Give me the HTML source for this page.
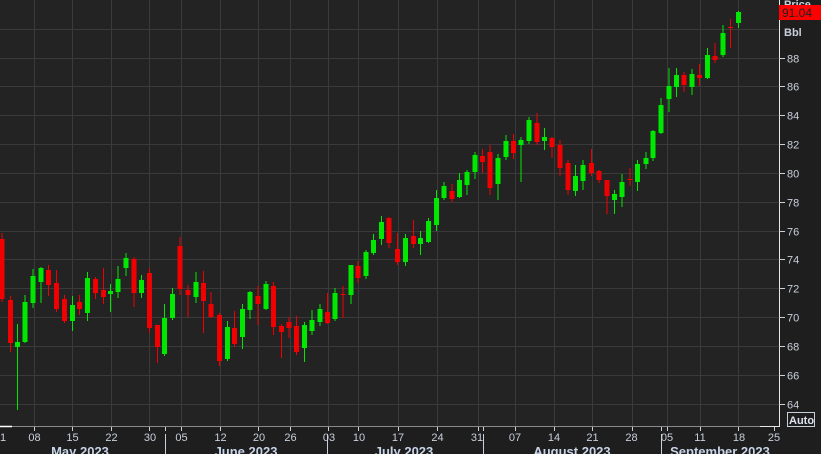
<!DOCTYPE html>
<html><head><meta charset="utf-8"><style>
html,body{margin:0;padding:0;background:#1e1e1e;width:821px;height:454px;overflow:hidden}
svg{display:block}
text{font-family:"Liberation Sans",sans-serif}
</style></head><body>
<svg width="821" height="454" viewBox="0 0 821 454" xmlns="http://www.w3.org/2000/svg">
<rect x="0" y="0" width="821" height="454" fill="#1e1e1e"/>
<rect x="0" y="0" width="779" height="426" fill="#232323"/>
<g stroke="#3a3a3a" stroke-width="1">
<path d="M0 404.5H779M0 375.5H779M0 346.5H779M0 317.5H779M0 288.5H779M0 259.5H779M0 231.5H779M0 202.5H779M0 173.5H779M0 144.5H779M0 115.5H779M0 86.5H779M0 58.5H779M0 29.5H779"/>
<path d="M34.5 0V426M72.5 0V426M111.5 0V426M149.5 0V426M181.5 0V426M220.5 0V426M258.5 0V426M290.5 0V426M328.5 0V426M358.5 0V426M398.5 0V426M437.5 0V426M478.5 0V426M515.5 0V426M554.5 0V426M592.5 0V426M632.5 0V426M667.5 0V426M700.5 0V426M738.5 0V426"/>
</g>
<g fill="none" stroke-linecap="butt">
<path stroke="#00e800" stroke-width="1" d="M17.5 324V410 M25 295V343 M33 269V308 M41 267V303 M72.5 296V331 M87.5 272V321 M110.5 284V312 M118 266V298 M126 253V276 M141.5 275V298 M164.5 304V356 M172.5 288V320 M196 272V303 M227.5 321V361 M242.5 304V349 M250 291V319 M266 281V310 M304.5 322V362 M312 310V335 M320 304V326 M335 288V321 M351 265V304 M366 250V279 M373.5 234V255 M381.5 216V245 M405.5 234V266 M420.5 231V255 M428.5 218V243 M436.5 190V231 M444 182V200 M459.5 173V198 M467 170V195 M475 152V179 M498 154V200 M506 135V160 M521 137V182 M529 117V144 M544.5 128V150 M575.5 165V196 M583 160V190 M614.5 190V214 M622 174V207 M637.5 160V191 M646 152V169 M653 130V161 M661 98V134 M669 68V112 M676.5 68V97 M692 69V95 M707.5 48V79 M723 25V57 M738.5 11V28"/>
<path stroke="#00e800" stroke-width="5" d="M17.5 342V347 M25 302V342 M33 276V303 M41 268V282 M72.5 305V321 M87.5 278V313 M110.5 291V294 M118 279V292 M126 258V268 M141.5 280V293 M164.5 318V354 M172.5 294V318 M196 282V297 M227.5 327V359 M242.5 309V337 M250 292V310 M266 284V309 M304.5 325V348 M312 320V331 M320 309V322 M335 293V319 M351 265V295 M366 252V276 M373.5 240V253 M381.5 222V239 M405.5 238V262 M420.5 238V244 M428.5 221V242 M436.5 198V225 M444 186V198 M459.5 180V197 M467 172V185 M475 155V172 M498 158V184 M506 141V157 M521 140V145 M529 120V141 M544.5 137V141 M575.5 176V191 M583 165V181 M614.5 194V200 M622 182V197 M637.5 164V182 M646 158V164 M653 131V158 M661 105V133 M669 86V99 M676.5 75V87 M692 74V87 M707.5 55V78 M723 33V55 M738.5 12V23"/>
<path stroke="#f00000" stroke-width="1" d="M2 233V302 M10.5 296V352 M48.5 265V296 M56.5 270V312 M64.5 295V323 M79.5 295V315 M95.5 277V299 M103.5 268V304 M134 257V307 M149.5 268V333 M157.5 325V363 M180 237V295 M188 285V317 M203.5 271V333 M211 292V318 M219.5 313V366 M234.5 311V347 M258 286V325 M273.5 282V335 M281.5 324V358 M289 317V338 M296.5 316V355 M327.5 293V324 M343 286V318 M358 261V283 M389 217V248 M397.5 233V265 M413.5 220V248 M452 184V202 M482.5 149V173 M490 145V195 M513.5 134V159 M537 113V145 M552 137V158 M560 140V176 M568 160V195 M591.5 149V176 M599 170V183 M607 180V214 M630 168V186 M684 72V92 M699.5 64V86 M715 43V63 M730.5 19V48"/>
<path stroke="#f00000" stroke-width="5" d="M2 239V299 M10.5 300V343 M48.5 270V285 M56.5 283V309 M64.5 299V321 M79.5 302V309 M95.5 279V293 M103.5 290V297 M134 259V293 M149.5 273V328 M157.5 325V347 M180 246V289 M188 290V295 M203.5 283V301 M211 304V317 M219.5 315V361 M234.5 328V344 M258 296V304 M273.5 286V327 M281.5 326V332 M289 322V328 M296.5 326V352 M327.5 312V323 M343 294V295 M358 266V278 M389 218V243 M397.5 249V262 M413.5 236V244 M452 191V199 M482.5 156V162 M490 152V188 M513.5 141V153 M537 123V142 M552 138V147 M560 145V168 M568 163V190 M591.5 163V173 M599 171V180 M607 180V196 M630 179V180 M684 75V85 M699.5 75V78 M715 56V60 M730.5 27V28"/>
</g>
<!-- axes -->
<path d="M0 426.5H779" stroke="#8a8a8a" stroke-width="1"/>
<path d="M0 426.5H12" stroke="#ffffff" stroke-width="1.5"/>
<path d="M760 426.5H779.5V0" stroke="#e8e8e8" stroke-width="1" fill="none"/>
<g stroke="#c8d0dc" stroke-width="1">
<path d="M779 404.5H785M779 375.5H785M779 346.5H785M779 317.5H785M779 288.5H785M779 259.5H785M779 231.5H785M779 202.5H785M779 173.5H785M779 144.5H785M779 115.5H785M779 86.5H785M779 58.5H785"/>
<path d="M34.5 427V431M72.5 427V431M111.5 427V431M149.5 427V431M165.5 427V431M181.5 427V431M220.5 427V431M258.5 427V431M290.5 427V431M328.5 427V431M358.5 427V431M398.5 427V431M437.5 427V431M478.5 427V431M483.5 427V431M515.5 427V431M554.5 427V431M592.5 427V431M632.5 427V431M661.5 427V431M667.5 427V431M700.5 427V431M738.5 427V431M774.5 427V431"/>
<path d="M165.5 434V454M327.5 434V454M483.5 434V454M661.5 434V454"/>
</g>
<g fill="#c8d0dc" font-size="11">
<text x="787" y="408.5">64</text><text x="787" y="379.5">66</text><text x="787" y="350.5">68</text><text x="787" y="321.5">70</text><text x="787" y="292.5">72</text><text x="787" y="263.5">74</text><text x="787" y="235.5">76</text><text x="787" y="206.5">78</text><text x="787" y="177.5">80</text><text x="787" y="148.5">82</text><text x="787" y="119.5">84</text><text x="787" y="90.5">86</text><text x="787" y="62.5">88</text>
<text x="784" y="36" font-weight="bold">Bbl</text>
<text x="784" y="8" font-weight="bold">Price</text>
</g>
<rect x="779" y="5" width="42" height="15" fill="#ff0000"/>
<text x="782" y="17" font-size="12" fill="#202020">91.04</text>
<rect x="787.5" y="412.5" width="27" height="14" fill="none" stroke="#c8d0dc" stroke-width="1"/>
<text x="789" y="424" font-size="11" font-weight="bold" fill="#dde4f0">Auto</text>
<g fill="#c8d0dc" font-size="11" text-anchor="middle">
<text x="3" y="441">1</text><text x="34.5" y="441">08</text><text x="72.5" y="441">15</text><text x="111.5" y="441">22</text><text x="150" y="441">30</text><text x="181.5" y="441">05</text><text x="220.5" y="441">12</text><text x="259" y="441">20</text><text x="290.5" y="441">26</text><text x="329" y="441">03</text><text x="359" y="441">10</text><text x="398" y="441">17</text><text x="437.5" y="441">24</text><text x="477" y="441">31</text><text x="515" y="441">07</text><text x="554" y="441">14</text><text x="592.5" y="441">21</text><text x="631.5" y="441">28</text><text x="667" y="441">05</text><text x="700" y="441">11</text><text x="739" y="441">18</text><text x="774" y="441">25</text>
</g>
<g fill="#c8d4e8" font-size="13" font-weight="bold" text-anchor="middle">
<text x="80" y="456">May 2023</text><text x="246" y="456">June 2023</text><text x="404" y="456">July 2023</text><text x="572" y="456">August 2023</text><text x="720" y="456">September 2023</text>
</g>
</svg>
</body></html>
